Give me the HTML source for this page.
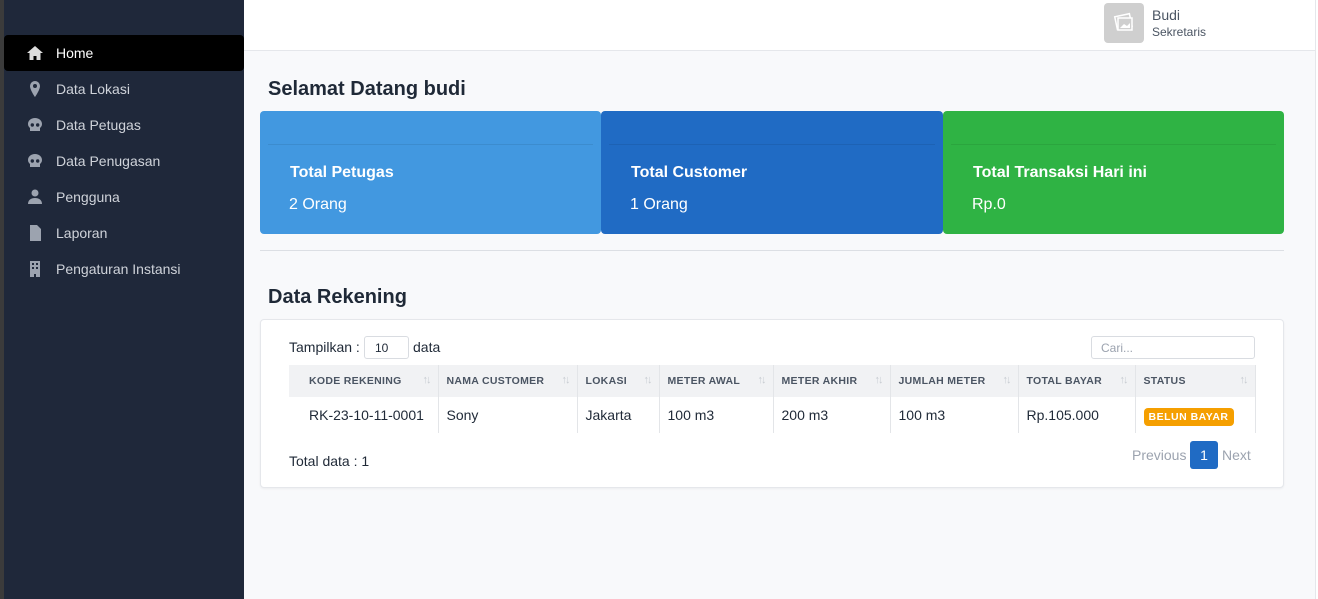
<!DOCTYPE html>
<html><head><meta charset="utf-8"><style>
*{box-sizing:border-box;margin:0;padding:0}
body{width:1318px;height:599px;overflow:hidden;font-family:"Liberation Sans",Arial,sans-serif;background:#f8f9fb;position:relative}
.side{position:absolute;left:0;top:0;width:244px;height:599px;background:#1f283a;border-left:4px solid #3b3b3b}
.nav{position:absolute;left:0;width:240px;height:36px;color:#cfd3da;font-size:14px;display:flex;align-items:center}
.nav.on{background:#000;color:#fff;border-radius:4px}
.nav svg{position:absolute;left:22px;top:10px}
.nav span{position:absolute;left:52px}
.top{position:absolute;left:244px;top:0;right:0;height:51px;background:#fff;border-bottom:1px solid #e5e7eb}
.av{position:absolute;left:1104px;top:3px;width:40px;height:40px;background:#cfcfcf;border-radius:4px}
.card{position:absolute;top:111px;height:123px;border-radius:4px;color:#fff}
.card .ln{position:absolute;left:8px;right:8px;top:33px;height:1px;background:rgba(0,0,0,.08)}
.card b{position:absolute;left:30px;top:53px;font-size:16px}
.card i{position:absolute;left:29px;top:85px;font-size:16px;font-style:normal}
h2{position:absolute;left:268px;font-size:20px;color:#1f2937;font-weight:bold}
.box{position:absolute;left:260px;top:319px;width:1024px;height:169px;background:#fff;border:1px solid #e5e7eb;border-radius:4px;box-shadow:0 1px 2px rgba(0,0,0,.05)}
table{position:absolute;left:289px;top:365px;border-collapse:collapse;font-size:14px;color:#1f2937}
th{background:#f1f2f4;height:32px;font-size:10.5px;letter-spacing:.3px;color:#4b5563;text-align:left;padding-left:8px;position:relative;border-right:1px solid #e3e5e8}
th:after{content:"↑↓";position:absolute;right:8px;top:9px;font-size:11px;font-weight:normal;letter-spacing:-2px;color:#c7cbd1}
td{height:36px;padding-left:8px;border-right:1px solid #e3e5e8}
</style></head><body>
<div class="side">
<div class="nav on" style="top:35px"><svg width="18" height="16" viewBox="0 0 18 16"><path d="M9 1 1 8h2.5v7h4v-4h3v4h4V8H17z" fill="#ddd"/></svg><span>Home</span></div>
<div class="nav" style="top:71px"><svg width="18" height="16" viewBox="0 0 18 16"><path d="M9 0a5 5 0 0 0-5 5c0 4 5 11 5 11s5-7 5-11a5 5 0 0 0-5-5zm0 7a2 2 0 1 1 0-4 2 2 0 0 1 0 4z" fill="#9ca3af"/></svg><span>Data Lokasi</span></div>
<div class="nav" style="top:107px"><svg width="18" height="16" viewBox="0 0 18 16"><path d="M9 1C5 1 2 3.5 2 7c0 2 1 3 2 4v3h10v-3c1-1 2-2 2-4 0-3.5-3-6-7-6z" fill="#9ca3af"/><circle cx="6.3" cy="8" r="1.7" fill="#1f283a"/><circle cx="11.7" cy="8" r="1.7" fill="#1f283a"/></svg><span>Data Petugas</span></div>
<div class="nav" style="top:143px"><svg width="18" height="16" viewBox="0 0 18 16"><path d="M9 1C5 1 2 3.5 2 7c0 2 1 3 2 4v3h10v-3c1-1 2-2 2-4 0-3.5-3-6-7-6z" fill="#9ca3af"/><circle cx="6.3" cy="8" r="1.7" fill="#1f283a"/><circle cx="11.7" cy="8" r="1.7" fill="#1f283a"/></svg><span>Data Penugasan</span></div>
<div class="nav" style="top:179px"><svg width="18" height="16" viewBox="0 0 18 16"><circle cx="9" cy="4" r="3.5" fill="#9ca3af"/><path d="M2 15c0-4 3-6 7-6s7 2 7 6z" fill="#9ca3af"/></svg><span>Pengguna</span></div>
<div class="nav" style="top:215px"><svg width="18" height="16" viewBox="0 0 18 16"><path d="M4 0h7l4 4v12H4z" fill="#9ca3af"/></svg><span>Laporan</span></div>
<div class="nav" style="top:251px"><svg width="18" height="16" viewBox="0 0 18 16"><path d="M4 0h10v16h-4v-3H8v3H4z" fill="#9ca3af"/><path d="M6 2h2v2H6zm4 0h2v2h-2zM6 6h2v2H6zm4 0h2v2h-2z" fill="#1f283a"/></svg><span>Pengaturan Instansi</span></div>
</div>
<div class="top"></div>
<div class="av"><svg width="40" height="40" viewBox="0 0 40 40"><rect x="12" y="12" width="15" height="13" fill="none" stroke="#fff" stroke-width="1.5" transform="rotate(-12 20 19)"/><rect x="14" y="15" width="14" height="12" fill="#cfcfcf" stroke="#fff" stroke-width="1.5"/><path d="M16 25l4-4 3 2 3-3v5z" fill="#fff"/></svg></div>
<div style="position:absolute;left:1152px;top:7px;font-size:14px;color:#4b5563">Budi</div>
<div style="position:absolute;left:1152px;top:25px;font-size:12px;color:#4b5563">Sekretaris</div>
<div style="position:absolute;right:0;top:0;width:3px;height:599px;background:#fff;border-left:1px solid #e5e7eb"></div>
<h2 style="top:78px">Selamat Datang budi</h2>
<div class="card" style="left:260px;width:341px;background:#4298e0"><div class="ln"></div><b>Total Petugas</b><i>2 Orang</i></div>
<div class="card" style="left:601px;width:342px;background:#206bc4"><div class="ln"></div><b>Total Customer</b><i>1 Orang</i></div>
<div class="card" style="left:943px;width:341px;background:#2fb344"><div class="ln"></div><b>Total Transaksi Hari ini</b><i>Rp.0</i></div>
<div style="position:absolute;left:260px;top:250px;width:1024px;height:1px;background:#dcdfe4"></div>
<h2 style="top:286px">Data Rekening</h2>
<div class="box"></div>
<div style="position:absolute;left:289px;top:339px;font-size:14px;color:#1f2937">Tampilkan :</div>
<div style="position:absolute;left:364px;top:336px;width:45px;height:23px;border:1px solid #d9dce1;border-radius:3px;font-size:12px;padding:4px 0 0 10px;color:#1f2937">10</div>
<div style="position:absolute;left:413px;top:339px;font-size:14px;color:#1f2937">data</div>
<div style="position:absolute;left:1091px;top:336px;width:164px;height:23px;border:1px solid #d9dce1;border-radius:3px;font-size:12px;padding:4px 0 0 9px;color:#9ca3af">Cari...</div>
<table>
<tr><th style="width:149px;padding-left:20px">KODE REKENING</th><th style="width:139px">NAMA CUSTOMER</th><th style="width:82px">LOKASI</th><th style="width:114px">METER AWAL</th><th style="width:117px">METER AKHIR</th><th style="width:128px">JUMLAH METER</th><th style="width:117px">TOTAL BAYAR</th><th style="width:120px">STATUS</th></tr>
<tr><td style="padding-left:20px">RK-23-10-11-0001</td><td>Sony</td><td>Jakarta</td><td>100 m3</td><td>200 m3</td><td>100 m3</td><td>Rp.105.000</td><td><span style="background:#f59f00;color:#fff;font-size:10.5px;font-weight:bold;letter-spacing:.5px;padding:3px 5px;border-radius:4px">BELUN BAYAR</span></td></tr>
</table>
<div style="position:absolute;left:289px;top:453px;font-size:14px;color:#1f2937">Total data : 1</div>
<div style="position:absolute;left:1132px;top:447px;font-size:14px;color:#9ca3af">Previous</div>
<div style="position:absolute;left:1190px;top:441px;width:28px;height:28px;background:#206bc4;border-radius:3px;color:#fff;font-size:14px;text-align:center;line-height:28px">1</div>
<div style="position:absolute;left:1222px;top:447px;font-size:14px;color:#9ca3af">Next</div>
</body></html>
